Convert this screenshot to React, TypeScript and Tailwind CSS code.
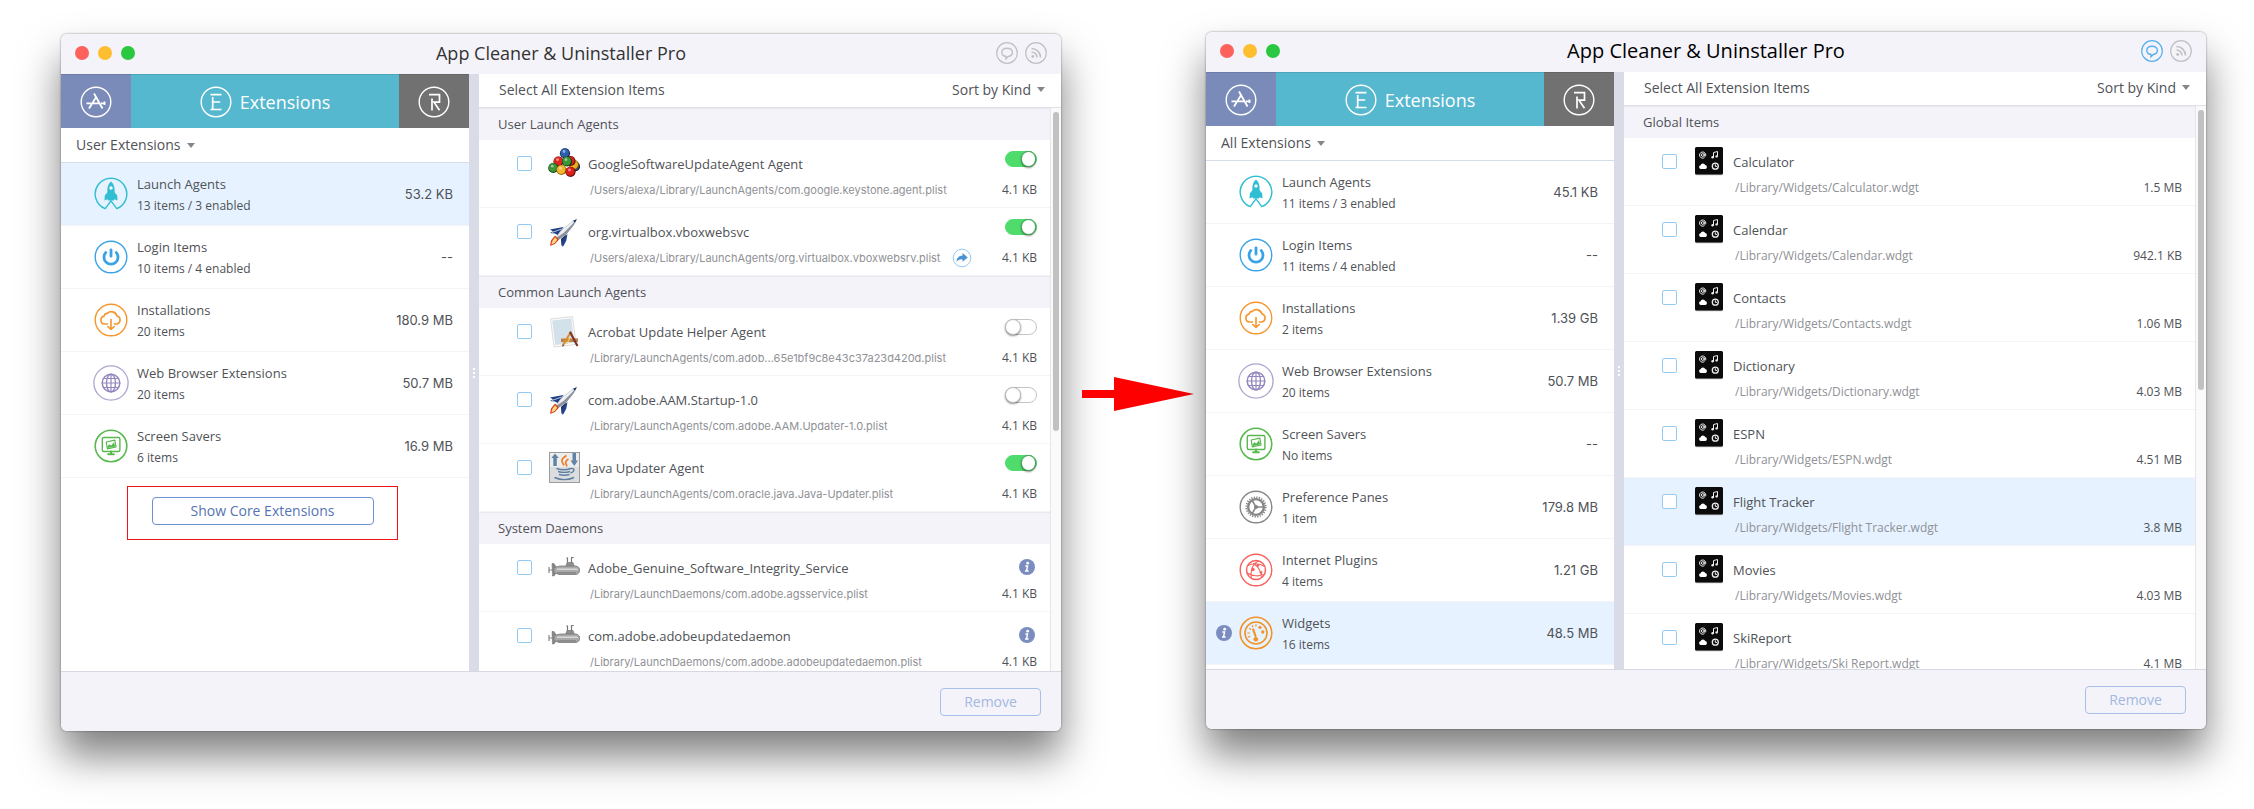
import { useId, useState, type ReactNode } from "react";
import clsx from "clsx";

type Category = {
  name: string;
  detail: string;
  size: string;
  icon: ReactNode;
  info?: boolean;
};

type Item = {
  name: string;
  path: string;
  size: string;
  icon: ReactNode;
  control?: "on" | "off" | "info";
  shared?: boolean;
  highlighted?: boolean;
};

type Section = { title: string; items: Item[] };

/* ---------- category icons ---------- */

function CategoryIcon({ color, children }: { color: string; children: ReactNode }) {
  return (
    <svg
      viewBox="0 0 36 36"
      className={clsx("size-9 shrink-0", color)}
      fill="none"
      stroke="currentColor"
      strokeWidth="1.4"
      strokeLinecap="round"
      strokeLinejoin="round"
      aria-hidden="true"
    >
      {children}
    </svg>
  );
}

const launchIcon = (
  <CategoryIcon color="text-[#30bfd2]">
    <path d="M12.2 32.7A15.8 15.8 0 1 1 23.8 32.7L18 24.8Z" />
    <path
      d="M18 5.6c2.9 2.4 4 6 3.6 10.6l2.6 3.2.3 5-3-1.2-.8 1.4h-5.4l-.8-1.4-3 1.2.3-5 2.6-3.2C14 11.6 15.1 8 18 5.6Z"
      fill="currentColor"
      stroke="none"
    />
    <circle cx="18" cy="12" r="1.7" fill="#fff" stroke="none" />
  </CategoryIcon>
);

const loginIcon = (
  <CategoryIcon color="text-[#39a3e6]">
    <circle cx="18" cy="18" r="15.8" />
    <path d="M18 10.8v6.4M12.7 13.6a7 7 0 1 0 10.6 0" strokeWidth="2.8" />
  </CategoryIcon>
);

const installIcon = (
  <CategoryIcon color="text-[#f6952c]">
    <circle cx="18" cy="18" r="15.8" />
    <path
      d="M14.5 22h-2.8a4 4 0 0 1-.7-7.9 3.6 3.6 0 0 1 3.4-2.7 5.6 5.6 0 0 1 9.4 2.3 4.3 4.3 0 0 1 .2 8.3h-2.6"
      strokeWidth="1.6"
    />
    <path d="M18 17.5v9.8M14.8 24.5l3.2 3 3.2-3" strokeWidth="1.6" />
  </CategoryIcon>
);

const browserIcon = (
  <CategoryIcon color="text-[#9487c0]">
    <circle cx="18" cy="18" r="17.1" strokeWidth="1.3" opacity=".75" />
    <circle cx="18" cy="18" r="8.8" strokeWidth="1.5" />
    <ellipse cx="18" cy="18" rx="4.5" ry="8.8" />
    <path d="M18 9.2v17.6M9.2 18h17.6M10.6 13.5h14.8M10.6 22.5h14.8" strokeWidth="1.2" />
  </CategoryIcon>
);

const screenIcon = (
  <CategoryIcon color="text-[#58b94e]">
    <circle cx="18" cy="18" r="15.8" strokeWidth="1.6" />
    <rect x="9.3" y="9.5" width="17.6" height="14" rx="1.5" />
    <path d="m13.2 14 8.6-1.8 1.2 6.8-8.6 1.8Z" strokeWidth="1.2" />
    <path d="m14.2 18.8 2.2-2.6 2 1.4 2.4-3.4 1.6 4.2-7.6 1.6Z" fill="currentColor" stroke="none" />
    <path d="M18 23.5v2.6M15.2 26.3h5.6" strokeWidth="2" />
  </CategoryIcon>
);

const prefsIcon = (
  <CategoryIcon color="text-[#848587]">
    <circle cx="18" cy="18" r="15.8" />
    <circle cx="18" cy="18" r="9.7" strokeWidth="1.8" strokeDasharray="1.3 1.24" strokeLinecap="butt" />
    <circle cx="18" cy="18" r="7.8" strokeWidth="2.3" />
    <path d="M18 18h7.5M18 18l-3.8-6.5M18 18l-3.8 6.5" strokeWidth="1.5" />
    <circle cx="18" cy="18" r="1.3" fill="currentColor" />
  </CategoryIcon>
);

const pluginsIcon = (
  <CategoryIcon color="text-[#f7625f]">
    <circle cx="18" cy="18" r="15.8" />
    <circle cx="18" cy="18" r="9.5" strokeWidth="1.5" />
    <path
      d="M10 13.5c4.500-2.700 11.500-2.300 16 .7M9.500 21c5 3.300 11.500 3.700 15.600 1.500M20 9c-5 2.800-7.800 8.500-6.800 17M15.500 11.500c4.500 3 7.500 8 8 13.300"
      strokeWidth="1.1"
    />
    <circle cx="15" cy="17.5" r="1.7" fill="currentColor" stroke="none" />
    <circle cx="19.800" cy="13.500" r="1.4" fill="currentColor" stroke="none" />
    <circle cx="23" cy="20.500" r="1.4" fill="currentColor" stroke="none" />
  </CategoryIcon>
);

const widgetsIcon = (
  <CategoryIcon color="text-[#f19327]">
    <circle cx="18" cy="18" r="15.8" strokeWidth="1.6" />
    <circle cx="18" cy="18" r="11" strokeWidth="1.6" />
    <path d="m15.2 14.5 2.3 6.5" strokeWidth="2.2" />
    <path
      d="M9.800 18h1.700M11.500 13.500l1.200.8M14.300 10.500l.5 1.200M18 9.500v1.500M10.500 22l1.200-.6"
      strokeWidth="1.2"
    />
    <circle cx="17.8" cy="24.2" r="2.3" fill="currentColor" stroke="none" />
    <circle cx="22" cy="12.3" r="1.6" fill="currentColor" stroke="none" />
    <circle cx="24.8" cy="17" r="1.7" fill="currentColor" stroke="none" />
  </CategoryIcon>
);

/* ---------- item icons ---------- */

function ItemIcon({ children }: { children: ReactNode }) {
  return (
    <svg viewBox="0 0 32 32" className="mt-2 size-8 shrink-0" aria-hidden="true">
      {children}
    </svg>
  );
}

// [cx, cy, fill, shadow], back to front
const balls = [
  [27, 18.5, "#27499a", "#101f4d"],
  [26, 17, "#e7ae1e", "#7a5406"],
  [22.5, 13, "#d4231c", "#6d0906"],
  [17, 5.3, "#2d5fb0", "#10274f"],
  [10.5, 13.5, "#df2620", "#6d0906"],
  [19, 13.5, "#3a9636", "#104010"],
  [5.3, 20, "#3a9636", "#104010"],
  [13.5, 22, "#f4b62b", "#8f640a"],
  [22.5, 23.8, "#dc211c", "#650705"],
] as const;

const ballsIcon = (
  <ItemIcon>
    {balls.map(([cx, cy, fill, shadow]) => (
      <g key={`${cx}-${cy}`}>
        <circle cx={cx} cy={cy} r="5.1" fill={shadow} />
        <circle cx={cx - 0.3} cy={cy - 0.4} r="4.3" fill={fill} />
        <circle cx={cx - 1} cy={cy - 1.8} r="1.4" fill="#fff" opacity=".5" />
      </g>
    ))}
  </ItemIcon>
);

const rocketIcon = (
  <ItemIcon>
    <path d="M2 13.5 15.5 11l-6 8-2.5-1.500-5-.5 3-1.500Z" fill="#1d3f86" />
    <path d="m17.5 19-4.500 4 .5 7 2-2.500 3.500-8Z" fill="#162d66" />
    <path d="m19.5 18-1.200 6.500-2.800 5.500-1.500.5.800-7Z" fill="#22448f" />
    <path d="M28.5 3.5 24 5.5l-11 9L7 23l2.500 1.500L18 19l8-10Z" fill="#8d939c" />
    <path d="M27.500 4 23.500 6 13 15l-5 7 8-5.500L24.500 8Z" fill="#eef0f3" />
    <path d="m29 3-4 1.800 2 2Z" fill="#1c3873" />
    <path d="m7 19.500-4 5L2 30l5-2 4-4.500Z" fill="#d8451d" />
    <path d="m7 21.500-2.700 3.500-.8 3.500L6.700 27l2.500-3.500Z" fill="#ffd98a" />
    <path d="M4 16.500 13.500 13" stroke="#dfe6f2" strokeWidth=".8" />
  </ItemIcon>
);

const acrobatIcon = (
  <ItemIcon>
    <path d="m2.500 3 22-2.500 3.500 28L6 31Z" fill="#fbfbfb" stroke="#d4d4d4" strokeWidth=".8" />
    <path d="m4.200 4.500 19-2.200 3 24.500-19 2.200Z" fill="#d3e1eb" />
    <path d="M13 22h17v4H13Z" fill="#b98250" />
    <path d="M13 22.500h17" stroke="#dcae7c" />
    <path d="m23 15.500-8 14" stroke="#dd8a34" strokeWidth="2" />
    <path d="m22 16 7.500 14" stroke="#7e3325" strokeWidth="2.2" />
    <path d="m14.200 31 .5-2.500 1.300.8Z" fill="#333" />
    <path d="m18.500 28 3.500-6" stroke="#f6d354" strokeWidth="1.2" />
  </ItemIcon>
);

const javaIcon = (
  <ItemIcon>
    <rect x="1.5" y="0.5" width="30" height="30" fill="#dcdddf" stroke="#9c9c9c" />
    <path d="M2 1h29v14H2Z" fill="#ededee" />
    <path d="M7 1.500 3.300 6h2v8h3.500V6h2Z" fill="#6484a5" />
    <path d="M24.500 1H28v7.500h2L26.300 14l-3.800-5.500h2Z" fill="#6484a5" />
    <path
      d="M18.500 3.500c-7 4.500-4.500 6-2.500 10M20.500 7c-4 2.500-3 4-1.500 7.500"
      stroke="#ee7d28"
      strokeWidth="1.7"
      fill="none"
    />
    <path
      d="M8.500 16.500c4 1.500 10 1.500 14.500 0M10 19.500c4 1.200 8 1.200 12 0M11 22.500c3.500 1 7 1 10.500 0M6.500 25.500c6 2.500 14 2.500 19.500 0"
      stroke="#5f7f9f"
      strokeWidth="1.4"
      fill="none"
    />
    <path d="M23 16.500c4.500-.5 3.500 3.500-.5 4.500" stroke="#5f7f9f" strokeWidth="1.3" fill="none" />
  </ItemIcon>
);

const submarineIcon = (
  <ItemIcon>
    <path d="M19.500 10.500V6h-1.200M23.500 11V5.500h2.200" stroke="#777" strokeWidth="1.2" fill="none" />
    <path d="m17.500 15 1.500-4.500h6l1.500 4.500Z" fill="#8f8f8f" stroke="#6b6b6b" strokeWidth=".6" />
    <path d="M4 11.500h2l2.500 4v5L6 24H4.500Z" fill="#8a8a8a" stroke="#666" strokeWidth=".5" />
    <path d="M6 15.500 12 14h16c5 1 5 7.500 0 8.500H11l-5-2Z" fill="#a9a9a9" stroke="#6d6d6d" strokeWidth=".7" />
    <path d="M9 16.500h19.500c1 0 1.500.8 1.500 1.500H9Z" fill="#d9d9d9" />
    <path d="M9 21h19" stroke="#7b7b7b" strokeWidth="1.2" />
    <path d="M1 15v6M1 18h4" stroke="#858585" strokeWidth="1.2" />
  </ItemIcon>
);

const widgetIcon = (
  <ItemIcon>
    <rect x="2" y="1.8" width="28" height="27.500" rx="1.5" fill="#b9b9b9" />
    <rect x="2" y="1" width="28" height="27.500" rx="1.5" fill="#0b0b0b" />
    <g fill="none" stroke="#eee" strokeWidth="1">
      <circle cx="9.8" cy="9" r="1.4" />
      <path d="M11.300 7.500v2.300c.1 1 1.500.7 1.500-.8a3.100 3.100 0 1 0-1.300 2.600" />
      <path d="M20.500 11.300V6.500l4-1v4.800" />
      <circle cx="22.3" cy="20.2" r="3" strokeWidth="1.3" />
      <path d="M22.300 18.200v2.200h1.800" />
    </g>
    <circle cx="19.600" cy="11.300" r="1.2" fill="#eee" />
    <circle cx="23.600" cy="10.400" r="1.2" fill="#eee" />
    <path d="M7.500 23a1.900 1.900 0 0 1 .1-3.700 2.400 2.400 0 0 1 4.600-.2A2 2 0 0 1 12.500 23Z" fill="#fff" />
  </ItemIcon>
);

/* ---------- data ---------- */

const userCategories: Category[] = [
  { name: "Launch Agents", detail: "13 items / 3 enabled", size: "53.2 KB", icon: launchIcon },
  { name: "Login Items", detail: "10 items / 4 enabled", size: "--", icon: loginIcon },
  { name: "Installations", detail: "20 items", size: "180.9 MB", icon: installIcon },
  { name: "Web Browser Extensions", detail: "20 items", size: "50.7 MB", icon: browserIcon },
  { name: "Screen Savers", detail: "6 items", size: "16.9 MB", icon: screenIcon },
];

const allCategories: Category[] = [
  { name: "Launch Agents", detail: "11 items / 3 enabled", size: "45.1 KB", icon: launchIcon },
  { name: "Login Items", detail: "11 items / 4 enabled", size: "--", icon: loginIcon },
  { name: "Installations", detail: "2 items", size: "1.39 GB", icon: installIcon },
  { name: "Web Browser Extensions", detail: "20 items", size: "50.7 MB", icon: browserIcon },
  { name: "Screen Savers", detail: "No items", size: "--", icon: screenIcon },
  { name: "Preference Panes", detail: "1 item", size: "179.8 MB", icon: prefsIcon },
  { name: "Internet Plugins", detail: "4 items", size: "1.21 GB", icon: pluginsIcon },
  { name: "Widgets", detail: "16 items", size: "48.5 MB", icon: widgetsIcon, info: true },
];

const agentSections: Section[] = [
  {
    title: "User Launch Agents",
    items: [
      {
        name: "GoogleSoftwareUpdateAgent Agent",
        path: "/Users/alexa/Library/LaunchAgents/com.google.keystone.agent.plist",
        size: "4.1 KB",
        icon: ballsIcon,
        control: "on",
      },
      {
        name: "org.virtualbox.vboxwebsvc",
        path: "/Users/alexa/Library/LaunchAgents/org.virtualbox.vboxwebsrv.plist",
        size: "4.1 KB",
        icon: rocketIcon,
        control: "on",
        shared: true,
      },
    ],
  },
  {
    title: "Common Launch Agents",
    items: [
      {
        name: "Acrobat Update Helper Agent",
        path: "/Library/LaunchAgents/com.adob...65e1bf9c8e43c37a23d420d.plist",
        size: "4.1 KB",
        icon: acrobatIcon,
        control: "off",
      },
      {
        name: "com.adobe.AAM.Startup-1.0",
        path: "/Library/LaunchAgents/com.adobe.AAM.Updater-1.0.plist",
        size: "4.1 KB",
        icon: rocketIcon,
        control: "off",
      },
      {
        name: "Java Updater Agent",
        path: "/Library/LaunchAgents/com.oracle.java.Java-Updater.plist",
        size: "4.1 KB",
        icon: javaIcon,
        control: "on",
      },
    ],
  },
  {
    title: "System Daemons",
    items: [
      {
        name: "Adobe_Genuine_Software_Integrity_Service",
        path: "/Library/LaunchDaemons/com.adobe.agsservice.plist",
        size: "4.1 KB",
        icon: submarineIcon,
        control: "info",
      },
      {
        name: "com.adobe.adobeupdatedaemon",
        path: "/Library/LaunchDaemons/com.adobe.adobeupdatedaemon.plist",
        size: "4.1 KB",
        icon: submarineIcon,
        control: "info",
      },
    ],
  },
];

const widget = (name: string, size: string, file = name): Item => ({
  name,
  path: `/Library/Widgets/${file}.wdgt`,
  size,
  icon: widgetIcon,
});

const widgetSections: Section[] = [
  {
    title: "Global Items",
    items: [
      widget("Calculator", "1.5 MB"),
      widget("Calendar", "942.1 KB"),
      widget("Contacts", "1.06 MB"),
      widget("Dictionary", "4.03 MB"),
      widget("ESPN", "4.51 MB"),
      { ...widget("Flight Tracker", "3.8 MB"), highlighted: true },
      widget("Movies", "4.03 MB"),
      widget("SkiReport", "4.1 MB", "Ski Report"),
    ],
  },
];

/* ---------- small parts ---------- */

function InfoBadge() {
  return (
    <svg viewBox="0 0 16 16" className="size-4" role="img" aria-label="Information">
      <circle cx="8" cy="8" r="8" fill="#7b8dbf" />
      <circle cx="8.7" cy="4.2" r="1.4" fill="#fff" />
      <path d="M6.300 7.100h2.200L7.600 11.900M6 12h3.600" stroke="#fff" strokeWidth="1.5" fill="none" />
    </svg>
  );
}

function Picker({ label, options }: { label: string; options: string[] }) {
  return (
    <div className="relative flex items-center">
      <select
        aria-label={label}
        className="field-sizing-content cursor-pointer appearance-none bg-transparent pr-[18px] text-sm text-[#4f5257] focus:outline-none"
      >
        {options.map((option) => (
          <option key={option}>{option}</option>
        ))}
      </select>
      <svg viewBox="0 0 8 5" className="pointer-events-none absolute right-1 h-[5px] w-2" aria-hidden="true">
        <path d="M0 0h8L4 5Z" fill="#85878c" />
      </svg>
    </div>
  );
}

function Toggle({ label, on }: { label: string; on: boolean }) {
  return (
    <input
      type="checkbox"
      role="switch"
      aria-label={label}
      defaultChecked={on}
      className="flex h-4 w-8 cursor-pointer appearance-none rounded-full border border-[#c4c4c6] bg-white before:-mt-px before:-ml-px before:block before:size-4 before:rounded-full before:border before:border-[#bdbdbf] before:bg-white before:shadow-[0_1px_2px_rgba(0,0,0,0.45)] before:content-[''] checked:border-[#50dc6c] checked:bg-[#50dc6c] checked:before:ml-[15px] checked:before:border-[#3a9d4d]"
    />
  );
}

function LetterIcon({ letter }: { letter: "A" | "E" | "R" }) {
  return (
    <svg
      viewBox="0 0 32 32"
      className="size-8"
      fill="none"
      stroke="#fff"
      strokeWidth="1.4"
      aria-hidden="true"
    >
      <circle cx="16" cy="16" r="14.8" />
      {letter === "A" && (
        <path
          d="M14 7.500 22.500 22.500M16.500 10.500 9 22.500M6.500 17.300h4.500M13 17.300h6M21 17.300h4.500M24.500 15.500v3.500"
          strokeWidth="1.8"
        />
      )}
      {letter === "E" && (
        <path d="M10.500 8.700h11M10.500 23.500h11M12.700 11v12.500M12.700 16h7.500" strokeWidth="1.7" />
      )}
      {letter === "R" && (
        <path d="M11 8.700h10.500v7.500H16l5.500 8M14 12.500v12" strokeWidth="1.7" />
      )}
    </svg>
  );
}

function TitleBar({ active }: { active: boolean }) {
  return (
    <header className="grid h-10 shrink-0 grid-cols-[1fr_auto_1fr] items-center bg-[#f4f3fa] px-3.5 pb-0.5">
      <div className="flex gap-[9px]">
        <button aria-label="Close" className="size-3.5 rounded-full bg-[#fc625b]" />
        <button aria-label="Minimize" className="size-3.5 rounded-full bg-[#fdbe2f]" />
        <button aria-label="Zoom" className="size-3.5 rounded-full bg-[#2ac840]" />
      </div>
      <h1 className={clsx(active ? "text-xl text-black" : "text-lg text-[#333]")}>
        App Cleaner &amp; Uninstaller Pro
      </h1>
      <div className="flex justify-end gap-[7px]">
        <button aria-label="Feedback" className={active ? "text-[#59b0ea]" : "text-[#c0c0c3]"}>
          <svg viewBox="0 0 22 22" className="size-[22px]" fill="none" stroke="currentColor" strokeWidth="1.2">
            <circle cx="11" cy="11" r="10.3" />
            <path d="M10 14.500c-6-.5-5.500-8.300 1-8.300 7 0 7 8 1.200 8.300l-2.200 2.200Z" strokeWidth="1.4" />
          </svg>
        </button>
        <button aria-label="News feed" className="text-[#c0c0c3]">
          <svg viewBox="0 0 22 22" className="size-[22px]" fill="none" stroke="currentColor" strokeWidth="1.2">
            <circle cx="11" cy="11" r="10.3" />
            <path d="M6.500 6.500a9 9 0 0 1 9 9M6.500 10a5.500 5.500 0 0 1 5.500 5.500" strokeWidth="1.5" />
            <circle cx="7.7" cy="14.5" r="1.4" fill="currentColor" stroke="none" />
          </svg>
        </button>
      </div>
    </header>
  );
}

function Tabs() {
  return (
    <nav className="flex h-[54px] shrink-0">
      <button
        aria-label="Applications"
        className="flex w-[70px] items-center justify-center border-t border-black/10 bg-[#7a8bba]"
      >
        <LetterIcon letter="A" />
      </button>
      <button className="flex flex-1 items-center justify-center gap-2 border-t border-black/10 bg-[#56b8cf] text-lg text-white">
        <LetterIcon letter="E" />
        Extensions
      </button>
      <button
        aria-label="Remaining files"
        className="flex w-[70px] items-center justify-center border-t border-black/10 bg-[#717171]"
      >
        <LetterIcon letter="R" />
      </button>
    </nav>
  );
}

function ItemRow({ item, pathClass }: { item: Item; pathClass: string }) {
  const id = useId();
  return (
    <li
      className={clsx(
        "flex h-[68px] items-start border-b border-[#f4f4f7] pr-[13px] pl-[38px]",
        item.highlighted && "bg-[#e6f2ff]",
      )}
    >
      <input
        id={id}
        type="checkbox"
        className="mt-4 mr-4 size-[15px] shrink-0 cursor-pointer appearance-none rounded-xs border border-[#93cbf5] bg-white checked:bg-[#93cbf5]"
      />
      {item.icon}
      <div className="ml-2 min-w-0 flex-1 pt-3">
        <label htmlFor={id} className="block text-[13px] leading-[25px]">
          {item.name}
        </label>
        <div className="flex h-[25px] items-center gap-3 pl-0.5">
          <span className={pathClass}>{item.path}</span>
          {item.shared && (
            <button aria-label="Show in Finder">
              <svg viewBox="0 0 20 20" className="size-5" aria-hidden="true">
                <circle cx="10" cy="10" r="8.8" fill="#fff" stroke="#94c8f2" />
                <path
                  d="M4.500 14c.3-4.500 2.500-6.200 6-6.200V5l5.300 4.500-5.300 4.300v-2.600c-2.800-.2-4.500.6-6 2.800Z"
                  fill="#4a92d6"
                />
              </svg>
            </button>
          )}
        </div>
      </div>
      <div className="flex flex-col items-end self-stretch pt-[11px] pb-[5px]">
        {item.control === "info" && (
          <div className="flex h-6 items-center pr-0.5">
            <InfoBadge />
          </div>
        )}
        {(item.control === "on" || item.control === "off") && (
          <Toggle label={`Enable ${item.name}`} on={item.control === "on"} />
        )}
        <span className="mt-auto text-[12px] leading-6 whitespace-nowrap">{item.size}</span>
      </div>
    </li>
  );
}

type AppWindowProps = {
  active?: boolean;
  scope: string;
  categories: Category[];
  initial: string;
  sections: Section[];
  pathClass: string;
  thumbClass: string;
  sidebarFooter?: ReactNode;
};

function AppWindow({
  active = false,
  scope,
  categories,
  initial,
  sections,
  pathClass,
  thumbClass,
  sidebarFooter,
}: AppWindowProps) {
  const [selected, setSelected] = useState(initial);

  return (
    <section className="flex min-w-0 flex-1 flex-col overflow-hidden rounded-md bg-white text-[#4f5257] shadow-[0_0_2px_rgba(0,0,0,0.5),0_25px_40px_rgba(0,0,0,0.5)]">
      <TitleBar active={active} />

      <div className="flex min-h-0 flex-1">
        <aside className="flex w-[408px] shrink-0 flex-col overflow-hidden">
          <Tabs />
          <div className="flex h-[35px] shrink-0 items-center border-b border-[#d5dfea] pl-[15px]">
            <Picker label="Extension scope" options={[scope]} />
          </div>
          <ul>
            {categories.map((category) => (
              <li key={category.name}>
                <button
                  onClick={() => setSelected(category.name)}
                  className={clsx(
                    "flex h-[63px] w-full items-center border-b border-[#f4f4f7] pr-4 pl-2.5 text-left",
                    category.name === selected && "bg-[#e6f2ff]",
                  )}
                >
                  <span className="mr-1.5 w-4 shrink-0">{category.info && <InfoBadge />}</span>
                  {category.icon}
                  <span className="ml-2 flex-1 pt-0.5">
                    <span className="block text-[13px] leading-[21px]">{category.name}</span>
                    <span className="block text-[12px] leading-[21px]">{category.detail}</span>
                  </span>
                  <span className="pt-0.5 font-[Inter,sans-serif] text-[13px]">{category.size}</span>
                </button>
              </li>
            ))}
          </ul>
          {sidebarFooter}
        </aside>

        <div className="flex w-2.5 shrink-0 flex-col items-center justify-center gap-0.5 bg-[#d9dce6]">
          <span className="size-0.5 bg-white" />
          <span className="size-0.5 bg-white" />
          <span className="size-0.5 bg-white" />
        </div>

        <main className="flex min-w-0 flex-1 flex-col">
          <div className="flex h-[34px] shrink-0 items-center justify-between border-b border-[#dfe1e8] pr-3 pb-0.5 pl-5 text-sm">
            <button>Select All Extension Items</button>
            <Picker label="Sort order" options={["Sort by Kind"]} />
          </div>
          <div className="flex min-h-0 flex-1">
            <div className="min-w-0 flex-1 overflow-hidden">
              {sections.map((section) => (
                <section key={section.title}>
                  <h2 className="flex h-8 items-center border-t border-[#e8e9ef] bg-[#f4f3fa] pl-[19px] text-[13px]">
                    {section.title}
                  </h2>
                  <ul>
                    {section.items.map((item) => (
                      <ItemRow key={item.name} item={item} pathClass={pathClass} />
                    ))}
                  </ul>
                </section>
              ))}
            </div>
            <div className="w-[11px] shrink-0 border-l border-[#e6e6e8] bg-[#fafafa] pt-1 pl-0.5">
              <div className={clsx("w-1.5 rounded-full bg-[#c1c1c1]", thumbClass)} />
            </div>
          </div>
        </main>
      </div>

      <footer className="flex h-[60px] shrink-0 items-center justify-end border-t border-[#d6d9e4] bg-[#f4f3fa] pr-5">
        <button
          disabled
          className="h-7 w-[101px] rounded-sm border border-[#a9c0ea] text-sm text-[#a3b8de]"
        >
          Remove
        </button>
      </footer>
    </section>
  );
}

export default function App() {
  return (
    <div className="flex h-screen min-h-[640px] overflow-hidden bg-white pt-8 pr-12 pb-[78px] pl-[61px] font-['Open_Sans','Noto_Sans',sans-serif]">
      <div className="flex min-w-0 flex-1 pt-0.5">
        <AppWindow
          scope="User Extensions"
          categories={userCategories}
          initial="Launch Agents"
          sections={agentSections}
          pathClass="font-[Inter,sans-serif] text-[11px] leading-6 text-[#8f9196]"
          thumbClass="h-[57%]"
          sidebarFooter={
            <div className="mt-2 mr-[71px] ml-[66px] flex justify-center border border-[#f01414] pt-2.5 pb-3.5">
              <button className="h-7 w-[222px] rounded-sm border border-[#6c8fd6] text-sm text-[#5674b4]">
                Show Core Extensions
              </button>
            </div>
          }
        />
      </div>

      <div className="flex w-[145px] shrink-0 items-center pt-6 pl-[21px]">
        <svg viewBox="0 0 112 34" className="h-[34px] w-28" role="img" aria-label="Leads to">
          <path d="M0 13h32V0l80 17-80 17V21H0Z" fill="#f00" />
        </svg>
      </div>

      <div className="flex min-w-0 flex-1 pb-0.5">
        <AppWindow
          active
          scope="All Extensions"
          categories={allCategories}
          initial="Widgets"
          sections={widgetSections}
          pathClass="text-[12px] leading-6 text-[#8f9196]"
          thumbClass="h-1/2"
        />
      </div>
    </div>
  );
}
